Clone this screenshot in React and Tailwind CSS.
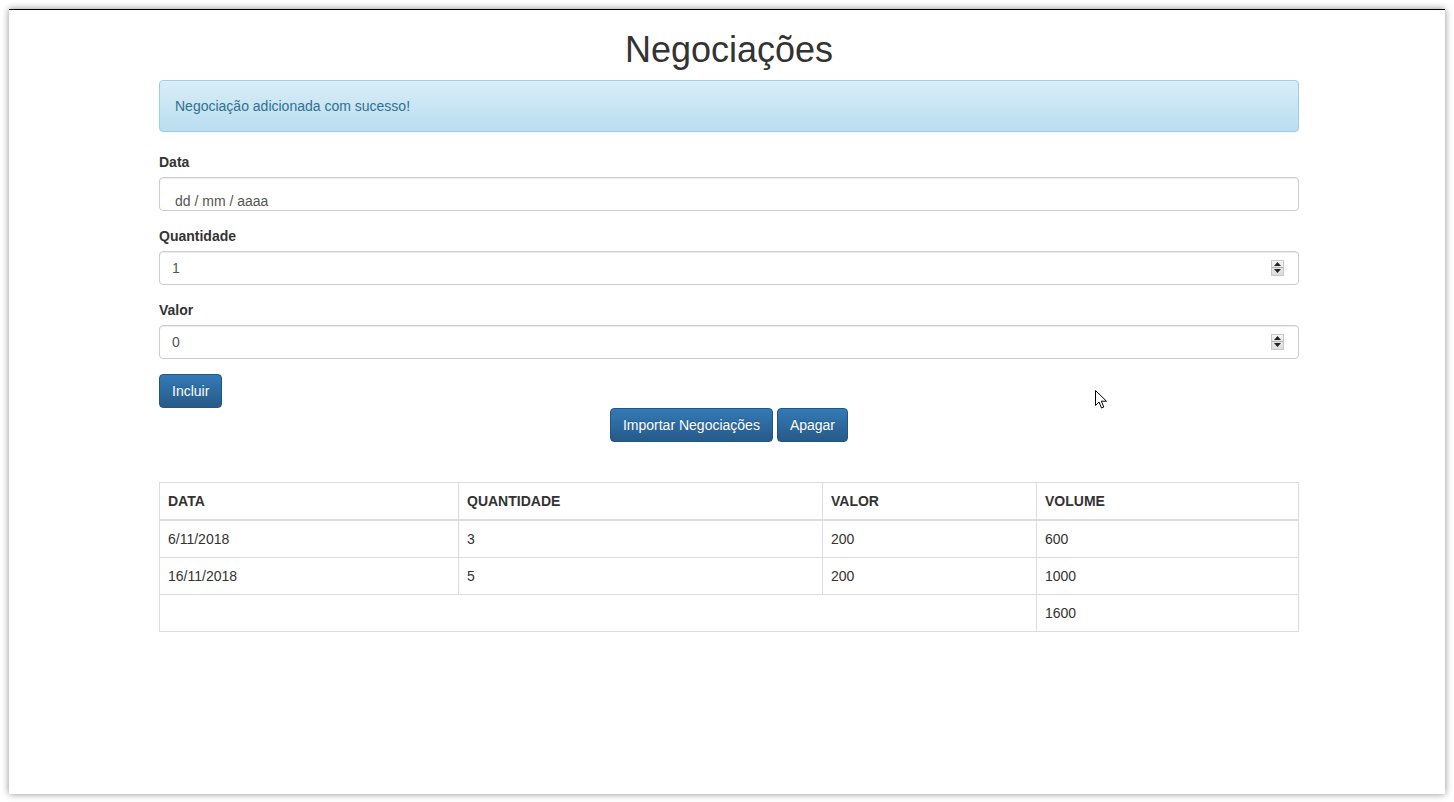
import React from "react";

const negociacoes = [
  { data: "6/11/2018", quantidade: 3, valor: 200, volume: 600 },
  { data: "16/11/2018", quantidade: 5, valor: 200, volume: 1000 },
];

function Spinner() {
  return (
    <div className="absolute right-[14px] top-[8px] flex h-[16px] w-[13px] flex-col border border-[#c8c8c8] bg-gradient-to-b from-[#f4f4f4] to-[#dcdcdc]">
      <div className="flex flex-1 items-center justify-center border-b border-[#b0b0b0]">
        <svg width="7" height="4" viewBox="0 0 7 4">
          <path d="M0 4 L3.5 0 L7 4 Z" fill="#222" />
        </svg>
      </div>
      <div className="flex flex-1 items-center justify-center">
        <svg width="7" height="4" viewBox="0 0 7 4">
          <path d="M0 0 L3.5 4 L7 0 Z" fill="#222" />
        </svg>
      </div>
    </div>
  );
}

function Campo({ label, children }) {
  return (
    <div className="mb-[15px]">
      <label className="mb-[5px] block font-bold leading-[20px]">{label}</label>
      {children}
    </div>
  );
}

const inputClass =
  "relative h-[34px] w-full rounded-[4px] border border-[#ccc] bg-white px-[12px] text-[14px] text-[#555] shadow-[inset_0_1px_1px_rgba(0,0,0,0.075)]";

const btnClass =
  "rounded-[4px] border border-[#245580] bg-gradient-to-b from-[#337ab7] to-[#265a88] px-[12px] py-[6px] text-[14px] leading-[20px] text-white [text-shadow:0_-1px_0_rgba(0,0,0,0.2)]";

export default function App() {
  const total = negociacoes.reduce((s, n) => s + n.volume, 0);

  return (
    <div
      className="relative h-[802px] w-[1454px] overflow-hidden bg-white pl-[9px] pt-[9px] text-[14px] leading-[20px] text-[#333]"
      style={{ fontFamily: '"Liberation Sans", Arial, sans-serif' }}
    >
      <div className="h-[785px] w-[1436px] border-t border-black bg-white shadow-[0_0_7px_rgba(0,0,0,0.45)]">
        <div className="ml-[150px] w-[1140px]">
          <h1 className="mb-[10px] mt-[20px] text-center text-[36px] font-medium leading-[39.6px]">
            Negociações
          </h1>

          <div className="mb-[20px] rounded-[4px] border border-[#9acfea] bg-gradient-to-b from-[#d9edf7] to-[#b9def0] p-[15px] text-[#31708f] shadow-[inset_0_1px_0_rgba(255,255,255,0.25),0_1px_2px_rgba(0,0,0,0.05)]">
            Negociação adicionada com sucesso!
          </div>

          <form>
            <Campo label="Data">
              <div className={inputClass + " pl-[15px] pt-[15px] leading-[16px]"}>dd / mm / aaaa</div>
            </Campo>
            <Campo label="Quantidade">
              <div className={inputClass + " leading-[32px]"}>
                1
                <Spinner />
              </div>
            </Campo>
            <Campo label="Valor">
              <div className={inputClass + " leading-[32px]"}>
                0
                <Spinner />
              </div>
            </Campo>
            <button type="button" className={btnClass}>
              Incluir
            </button>
          </form>

          <div className="flex justify-center gap-[4px]">
            <button type="button" className={btnClass}>
              Importar Negociações
            </button>
            <button type="button" className={btnClass}>
              Apagar
            </button>
          </div>

          <table className="mt-[40px] w-full border-collapse border border-[#ddd]">
            <thead>
              <tr className="text-left">
                <th className="w-[299px] border border-b-2 border-[#ddd] p-[8px] font-bold">DATA</th>
                <th className="w-[364px] border border-b-2 border-[#ddd] p-[8px] font-bold">QUANTIDADE</th>
                <th className="w-[214px] border border-b-2 border-[#ddd] p-[8px] font-bold">VALOR</th>
                <th className="border border-b-2 border-[#ddd] p-[8px] font-bold">VOLUME</th>
              </tr>
            </thead>
            <tbody>
              {negociacoes.map((n) => (
                <tr key={n.data}>
                  <td className="border border-[#ddd] p-[8px]">{n.data}</td>
                  <td className="border border-[#ddd] p-[8px]">{n.quantidade}</td>
                  <td className="border border-[#ddd] p-[8px]">{n.valor}</td>
                  <td className="border border-[#ddd] p-[8px]">{n.volume}</td>
                </tr>
              ))}
            </tbody>
            <tfoot>
              <tr>
                <td colSpan={3} className="border border-[#ddd] p-[8px]"></td>
                <td className="border border-[#ddd] p-[8px]">{total}</td>
              </tr>
            </tfoot>
          </table>
        </div>
      </div>

      <svg className="absolute left-[1095px] top-[390px]" width="13" height="20" viewBox="0 0 13 20">
        <path
          d="M0.5 0.5 L0.5 15.5 L4 12 L6.5 18 L8.8 17 L6.3 11.2 L11.5 11.2 Z"
          fill="#fff"
          stroke="#000"
          strokeWidth="1"
          strokeLinejoin="miter"
        />
      </svg>
    </div>
  );
}
